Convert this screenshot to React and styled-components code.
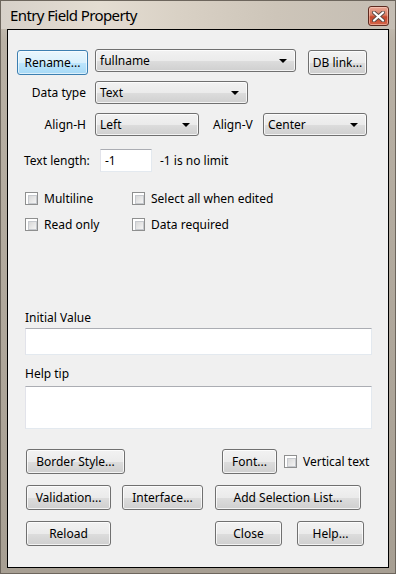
import styled, { createGlobalStyle } from 'styled-components';

const GlobalStyle = createGlobalStyle`
  html, body {
    margin: 0;
    padding: 0;
    background: #ffffff;
  }
  * {
    box-sizing: border-box;
  }
`;

// Window frame
const Window = styled.div`
  width: 396px;
  height: 574px;
  display: flex;
  flex-direction: column;
  border: 1px solid #6d665d;
  background: linear-gradient(180deg, #cfc8be 0px, #b9b1a5 40px, #a79f93 100%);
  font-family: "Noto Sans", "Open Sans", sans-serif;
  font-size: 12px;
  color: #000;
`;

const TitleBar = styled.div`
  height: 28px;
  flex: none;
  display: flex;
  align-items: flex-start;
  justify-content: space-between;
  padding: 0 6px 0 9px;
  background: linear-gradient(90deg, #d7d1c9 0%, #e4ddd2 25%, #d9d1c5 45%, #cdc5b9 70%, #c4bdb3 100%);
`;

const Title = styled.div`
  font-size: 15px;
  letter-spacing: -0.6px;
  line-height: 20px;
  margin-top: 4px;
  color: #000;
`;

const CloseButton = styled.div`
  width: 21px;
  height: 20px;
  margin-top: 5px;
  border: 1px solid #5d2a1f;
  border-radius: 3px;
  display: flex;
  align-items: center;
  justify-content: center;
  background: linear-gradient(180deg, #eaa896 0%, #d97c64 45%, #c7452a 55%, #d2654a 100%);
  box-shadow: inset 0 0 0 1px rgba(255, 220, 205, 0.5);
`;

const Client = styled.div`
  flex: 1;
  margin: 0 6px 5px 6px;
  border: 1px solid #000;
  background: #f0f0f0;
  display: flex;
  flex-direction: column;
`;

// Rows
const Row = styled.div`
  display: flex;
  align-items: ${({ $align }) => $align || 'center'};
  height: ${({ $h }) => $h}px;
  margin-top: ${({ $mt }) => $mt}px;
  padding-left: ${({ $pl }) => $pl || 0}px;
  flex: none;
`;

const Label = styled.span`
  display: inline-block;
  width: ${({ $w }) => ($w ? `${$w}px` : 'auto')};
  text-align: ${({ $right }) => ($right ? 'right' : 'left')};
  margin-left: ${({ $ml }) => $ml || 0}px;
  white-space: nowrap;
`;

// Windows 7 style push button
const Button = styled.button`
  width: ${({ $w }) => $w}px;
  height: 25px;
  margin-left: ${({ $ml }) => $ml || 0}px;
  margin-top: ${({ $mt }) => $mt || 0}px;
  padding: 0;
  font-family: inherit;
  font-size: 12px;
  color: #000;
  border-radius: 3px;
  border: 1px solid ${({ $primary }) => ($primary ? '#3c7fb1' : '#707070')};
  background: ${({ $primary }) =>
    $primary
      ? 'linear-gradient(180deg, #eaf6fd 0%, #d9f0fc 50%, #bee6fd 51%, #a7d9f5 100%)'
      : 'linear-gradient(180deg, #f2f2f2 0%, #ebebeb 50%, #dddddd 51%, #cfcfcf 100%)'};
  box-shadow: inset 0 0 0 1px ${({ $primary }) => ($primary ? 'rgba(255,255,255,0.6)' : 'rgba(255,255,255,0.75)')};
  flex: none;
`;

// Drop-down list (read-only combo)
const Combo = styled.div`
  width: ${({ $w }) => $w}px;
  height: 23px;
  margin-left: ${({ $ml }) => $ml || 0}px;
  border: 1px solid #707070;
  border-radius: 3px;
  background: linear-gradient(180deg, #f2f2f2 0%, #ebebeb 50%, #dddddd 51%, #cfcfcf 100%);
  box-shadow: inset 0 0 0 1px rgba(255, 255, 255, 0.75);
  display: flex;
  align-items: center;
  justify-content: space-between;
  padding: 0 8px 0 4px;
  flex: none;

  &::after {
    content: '';
    width: 0;
    height: 0;
    border-left: 4px solid transparent;
    border-right: 4px solid transparent;
    border-top: 4px solid #000;
  }
`;

const TextBox = styled.div`
  width: ${({ $w }) => $w}px;
  height: ${({ $h }) => $h}px;
  margin-left: ${({ $ml }) => $ml || 0}px;
  background: #fff;
  border: 1px solid #e3e9ef;
  border-top-color: #abadb3;
  border-left-color: #e2e3ea;
  padding: 2px 4px;
  line-height: 17px;
  flex: none;
`;

const Check = styled.label`
  display: flex;
  align-items: center;
  width: ${({ $w }) => ($w ? `${$w}px` : 'auto')};
  margin-left: ${({ $ml }) => $ml || 0}px;
  gap: 6px;
  white-space: nowrap;
  flex: none;
`;

const Box = styled.span`
  width: 13px;
  height: 13px;
  border: 1px solid #8e8f8f;
  background: #fff;
  padding: 2px;
  flex: none;

  &::before {
    content: '';
    display: block;
    width: 7px;
    height: 7px;
    border: 1px solid #c6c9ce;
    background: linear-gradient(135deg, #d8d8d8 0%, #f4f4f4 100%);
  }
`;

const FieldLabel = styled.div`
  margin-top: ${({ $mt }) => $mt}px;
  padding-left: 17px;
  line-height: 16px;
  flex: none;
`;

const FieldBox = styled(TextBox)`
  margin: ${({ $mt }) => $mt}px 0 0 17px;
`;

const CloseGlyph = () => (
  <svg width="13" height="11" viewBox="0 0 13 11">
    <path d="M2 1.5 L11 9.5 M11 1.5 L2 9.5" stroke="#5b4a46" strokeWidth="4" strokeLinecap="round" />
    <path d="M2 1.5 L11 9.5 M11 1.5 L2 9.5" stroke="#ffffff" strokeWidth="2.2" strokeLinecap="round" />
  </svg>
);

const App = () => {
  return (
    <>
      <GlobalStyle />
      <Window>
        <TitleBar>
          <Title>Entry Field Property</Title>
          <CloseButton>
            <CloseGlyph />
          </CloseButton>
        </TitleBar>
        <Client>
          <Row $h={26} $mt={19} $pl={9} $align="flex-start">
            <Button $w={71} $mt={1} $primary>Rename...</Button>
            <Combo $w={201} $ml={7}>fullname</Combo>
            <Button $w={59} $mt={1} $ml={12}>DB link...</Button>
          </Row>

          <Row $h={23} $mt={6}>
            <Label $w={78} $right>Data type</Label>
            <Combo $w={153} $ml={9}>Text</Combo>
          </Row>

          <Row $h={23} $mt={9}>
            <Label $w={78} $right>Align-H</Label>
            <Combo $w={104} $ml={9}>Left</Combo>
            <Label $ml={14} $w={50}>Align-V</Label>
            <Combo $w={104}>Center</Combo>
          </Row>

          <Row $h={23} $mt={13} $pl={16}>
            <Label $w={76}>Text length:</Label>
            <TextBox $w={52} $h={23}>-1</TextBox>
            <Label $ml={8}>-1 is no limit</Label>
          </Row>

          <Row $h={14} $mt={19} $pl={17}>
            <Check $w={107}><Box />Multiline</Check>
            <Check><Box />Select all when edited</Check>
          </Row>

          <Row $h={14} $mt={12} $pl={17}>
            <Check $w={107}><Box />Read only</Check>
            <Check><Box />Data required</Check>
          </Row>

          <FieldLabel $mt={79}>Initial Value</FieldLabel>
          <FieldBox $w={347} $h={27} $mt={2} />

          <FieldLabel $mt={11}>Help tip</FieldLabel>
          <FieldBox $w={347} $h={43} $mt={4} />

          <Row $h={25} $mt={20} $pl={18}>
            <Button $w={99}>Border Style...</Button>
            <Button $w={55} $ml={97}>Font...</Button>
            <Check $ml={7}><Box />Vertical text</Check>
          </Row>

          <Row $h={25} $mt={11} $pl={18}>
            <Button $w={85}>Validation...</Button>
            <Button $w={81} $ml={11}>Interface...</Button>
            <Button $w={146} $ml={12}>Add Selection List...</Button>
          </Row>

          <Row $h={25} $mt={11} $pl={18}>
            <Button $w={85}>Reload</Button>
            <Button $w={67} $ml={104}>Close</Button>
            <Button $w={67} $ml={15}>Help...</Button>
          </Row>
        </Client>
      </Window>
    </>
  );
};

export default App;
